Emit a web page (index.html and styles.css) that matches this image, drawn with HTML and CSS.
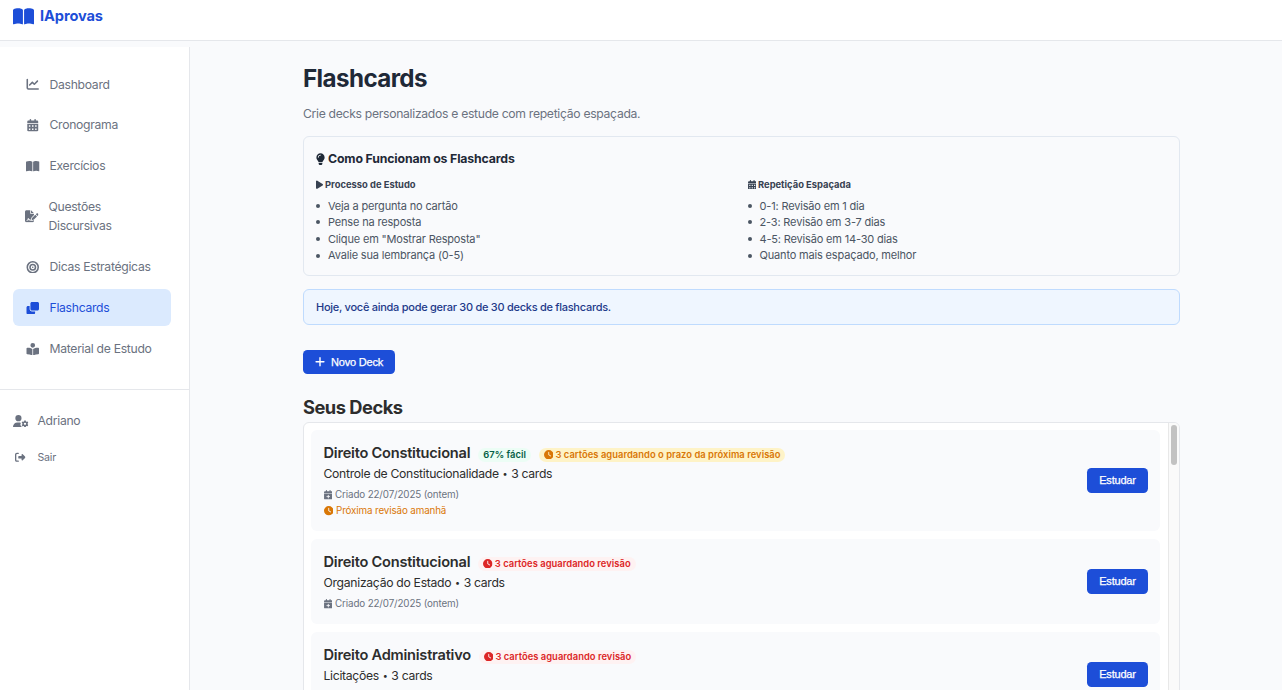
FILE: index.html
```html
<!DOCTYPE html>
<html lang="pt-BR">
<head>
<meta charset="utf-8">
<title>IAprovas - Flashcards</title>
<link rel="stylesheet" href="styles.css">
</head>
<body>
<svg class="sprite" aria-hidden="true">
  <symbol id="book-open" viewBox="0 0 576 512"><path d="M249.6 471.5c10.8 3.8 22.4-4.1 22.4-15.5V78.6c0-4.2-1.6-8.4-5-11C247.4 52 202.4 32 144 32C93.5 32 46.3 45.3 18.1 56.1C6.8 60.5 0 71.7 0 83.8V454.1c0 11.9 12.8 20.2 24.1 16.5C55.6 460.1 105.5 448 144 448c33.9 0 79 14 105.6 23.5zm76.8 0C353 462 398.1 448 432 448c38.5 0 88.4 12.1 119.9 22.6c11.3 3.8 24.1-4.6 24.1-16.5V83.8c0-12.1-6.8-23.3-18.1-27.6C529.7 45.3 482.5 32 432 32c-58.4 0-103.4 20-123 35.6c-3.3 2.6-5 6.8-5 11V456c0 11.4 11.7 19.3 22.4 15.5z"/></symbol>
  <symbol id="chart-line" viewBox="0 0 512 512"><path d="M64 64c0-17.7-14.3-32-32-32S0 46.3 0 64V400c0 44.2 35.8 80 80 80H480c17.7 0 32-14.3 32-32s-14.3-32-32-32H80c-8.8 0-16-7.2-16-16V64zm406.6 86.6c12.5-12.5 12.5-32.8 0-45.3s-32.8-12.5-45.3 0L320 210.7l-57.4-57.4c-12.5-12.5-32.8-12.5-45.3 0l-112 112c-12.5 12.5-12.5 32.8 0 45.3s32.8 12.5 45.3 0L240 221.3l57.4 57.4c12.5 12.5 32.8 12.5 45.3 0l128-128z"/></symbol>
  <symbol id="calendar" viewBox="0 0 448 512"><path fill-rule="evenodd" d="M128 0c17.7 0 32 14.3 32 32V64H288V32c0-17.7 14.3-32 32-32s32 14.3 32 32V64h48c26.5 0 48 21.5 48 48v48H0V112C0 85.5 21.5 64 48 64H96V32c0-17.7 14.3-32 32-32zM0 192H448V464c0 26.5-21.5 48-48 48H48c-26.5 0-48-21.5-48-48V192zm64 80v32c0 8.800 7.200 16 16 16h32c8.800 0 16-7.200 16-16V272c0-8.800-7.200-16-16-16H80c-8.800 0-16 7.200-16 16zm128 0v32c0 8.800 7.200 16 16 16h32c8.800 0 16-7.200 16-16V272c0-8.800-7.200-16-16-16H208c-8.800 0-16 7.200-16 16zm144-16c-8.800 0-16 7.200-16 16v32c0 8.800 7.200 16 16 16h32c8.800 0 16-7.200 16-16V272c0-8.800-7.200-16-16-16H336zM64 400v32c0 8.800 7.200 16 16 16h32c8.800 0 16-7.200 16-16V400c0-8.800-7.200-16-16-16H80c-8.800 0-16 7.200-16 16zm144-16c-8.800 0-16 7.200-16 16v32c0 8.800 7.200 16 16 16h32c8.800 0 16-7.200 16-16V400c0-8.800-7.200-16-16-16H208zm112 16v32c0 8.800 7.200 16 16 16h32c8.800 0 16-7.200 16-16V400c0-8.800-7.200-16-16-16H336c-8.800 0-16 7.200-16 16z"/></symbol>
  <symbol id="calendar-plus" viewBox="0 0 448 512"><path fill-rule="evenodd" d="M128 0c17.7 0 32 14.3 32 32V64H288V32c0-17.7 14.3-32 32-32s32 14.3 32 32V64h48c26.5 0 48 21.5 48 48v48H0V112C0 85.5 21.5 64 48 64H96V32c0-17.7 14.3-32 32-32zM0 192H448V464c0 26.5-21.5 48-48 48H48c-26.5 0-48-21.5-48-48V192zM248 272c0-13.3-10.7-24-24-24s-24 10.7-24 24v56H144c-13.300 0-24 10.700-24 24s10.700 24 24 24h56v56c0 13.300 10.700 24 24 24s24-10.700 24-24V376h56c13.300 0 24-10.700 24-24s-10.700-24-24-24H248V272z"/></symbol>
  <symbol id="clock" viewBox="0 0 512 512"><path fill-rule="evenodd" d="M256 0a256 256 0 1 1 0 512A256 256 0 1 1 256 0zM232 120V256c0 8 4 15.500 10.700 20l96 64c11 7.400 25.900 4.400 33.300-6.700s4.400-25.900-6.700-33.300L280 243.200V120c0-13.300-10.700-24-24-24s-24 10.700-24 24z"/></symbol>
  <symbol id="file-signature" viewBox="0 0 576 512"><path d="M64 0C28.7 0 0 28.7 0 64V448c0 35.3 28.7 64 64 64H320c35.3 0 64-28.7 64-64V428.7c-2.7 1.1-5.4 2-8.2 2.7l-60.1 15c-3 .7-6 1.2-9 1.4c-.9 .1-1.8 .2-2.7 .2H240c-6.1 0-11.6-3.4-14.3-8.8l-8.8-17.7c-1.7-3.4-5.1-5.5-8.8-5.5s-7.2 2.1-8.8 5.5l-8.8 17.7c-2.9 5.9-9.2 9.4-15.7 8.8s-12.1-5.1-13.9-11.3L144 381l-9.8 32.8c-6.1 20.3-24.8 34.2-46 34.2H80c-8.8 0-16-7.2-16-16s7.2-16 16-16h8.2c7.1 0 13.3-4.6 15.3-11.4l14.9-49.5c3.4-11.3 13.8-19.1 25.6-19.1s22.2 7.7 25.6 19.1l11.6 38.6c7.4-6.2 16.8-9.7 26.8-9.7c15.9 0 30.4 9 37.5 23.2l4.4 8.8h8.9c-3.1-8.8-3.7-18.4-1.4-27.8l15-60.1c2.8-11.3 8.6-21.5 16.8-29.7L384 203.600V160H256c-17.700 0-32-14.300-32-32V0H64zM256 0V128H384L256 0zM549.800 139.700c-15.600-15.600-40.900-15.600-56.600 0l-29.400 29.400 71 71 29.400-29.400c15.600-15.600 15.600-40.900 0-56.600l-14.400-14.400zM311.900 321c-4.100 4.100-7 9.200-8.400 14.900l-15 60.100c-1.400 5.500 .2 11.200 4.200 15.200s9.700 5.600 15.200 4.200l60.100-15c5.600-1.400 10.800-4.300 14.900-8.400L512.100 262.700l-71-71L311.900 321z"/></symbol>
  <symbol id="bullseye" viewBox="0 0 512 512"><path fill-rule="evenodd" d="M448 256A192 192 0 1 0 64 256a192 192 0 1 0 384 0zM0 256a256 256 0 1 1 512 0A256 256 0 1 1 0 256zm256 80a80 80 0 1 0 0-160 80 80 0 1 0 0 160zm0-224a144 144 0 1 1 0 288 144 144 0 1 1 0-288zM224 256a32 32 0 1 1 64 0 32 32 0 1 1-64 0z"/></symbol>
  <symbol id="clone" viewBox="0 0 512 512"><path d="M0 448c0 35.3 28.7 64 64 64H288c35.3 0 64-28.7 64-64V384H224c-53 0-96-43-96-96V160H64c-35.3 0-64 28.7-64 64V448zm224-96H448c35.3 0 64-28.7 64-64V64c0-35.3-28.7-64-64-64H224c-35.3 0-64 28.7-64 64V288c0 35.3 28.7 64 64 64z"/></symbol>
  <symbol id="book-reader" viewBox="0 0 512 512"><path d="M160 96a96 96 0 1 1 192 0A96 96 0 1 1 160 96zm80 152V512l-48.4-24.2c-20.9-10.4-43.5-17-66.8-19.3l-96-9.6C12.5 457.2 0 443.5 0 427V224c0-17.7 14.3-32 32-32H62.3c63.6 0 125.6 19.6 177.7 56zm32 264V248c52.1-36.4 114.1-56 177.7-56H480c17.7 0 32 14.3 32 32V427c0 16.4-12.5 30.2-28.8 31.8l-96 9.600c-23.200 2.300-45.900 8.900-66.800 19.300L272 512z"/></symbol>
  <symbol id="user-cog" viewBox="0 0 640 512"><path d="M224 0a128 128 0 1 1 0 256A128 128 0 1 1 224 0zM178.300 304h91.400c11.800 0 23.400 1.200 34.500 3.300c-2.100 18.500 7.400 35.600 21.800 44.800c-16.600 10.600-26.700 31.600-20 53.300c4 12.900 9.400 25.500 16.400 37.600s15.200 23.100 24.400 33c15.700 16.900 39.600 18.400 57.200 8.700v.9c0 9.200 2.700 18.500 7.900 26.300H29.700C13.300 512 0 498.700 0 482.300C0 383.800 79.800 304 178.300 304z"/><path fill-rule="evenodd" d="M464 222h64l8 42 26 15 41-14 32 56-33 28v30l33 28-32 56-41-14-26 15-8 42h-64l-8-42-26-15-41 14-32-56 33-28v-30l-33-28 32-56 41 14 26-15zM544 364a48 48 0 1 0-96 0 48 48 0 1 0 96 0z"/></symbol>
  <symbol id="sign-out" viewBox="0 0 512 512"><path d="M377.900 105.900L500.700 228.700c7.200 7.200 11.300 17.100 11.300 27.300s-4.100 20.100-11.300 27.300L377.900 406.100c-6.400 6.400-15 9.900-24 9.900c-18.700 0-33.900-15.200-33.900-33.900l0-62.100-128 0c-17.700 0-32-14.300-32-32l0-64c0-17.700 14.300-32 32-32l128 0 0-62.100c0-18.700 15.200-33.900 33.900-33.900c9 0 17.600 3.600 24 9.900zM160 96L96 96c-17.700 0-32 14.300-32 32l0 256c0 17.700 14.300 32 32 32l64 0c17.700 0 32 14.300 32 32s-14.300 32-32 32l-64 0c-53 0-96-43-96-96L0 128C0 75 43 32 96 32l64 0c17.700 0 32 14.300 32 32s-14.300 32-32 32z"/></symbol>
  <symbol id="lightbulb" viewBox="0 0 384 512"><path fill-rule="evenodd" d="M272 384c9.600-31.900 29.500-59.100 49.200-86.200c5.200-7.100 10.400-14.200 15.400-21.400c19.800-28.500 31.400-63 31.400-100.300C368 78.800 289.200 0 192 0S16 78.800 16 176c0 37.300 11.600 71.900 31.400 100.300c5 7.200 10.200 14.300 15.400 21.400c19.800 27.100 39.700 54.400 49.200 86.200H272zM192 512c44.200 0 80-35.800 80-80V416H112v16c0 44.200 35.800 80 80 80zM112 176c0 8.800-7.200 16-16 16s-16-7.200-16-16c0-61.900 50.100-112 112-112c8.800 0 16 7.200 16 16s-7.200 16-16 16c-44.200 0-80 35.800-80 80z"/></symbol>
  <symbol id="play" viewBox="0 0 384 512"><path d="M73 39c-14.800-9.100-33.400-9.400-48.500-.9S0 62.600 0 80V432c0 17.400 9.400 33.400 24.500 41.900s33.700 8.100 48.500-.9L361 297c14.300-8.700 23-24.200 23-41s-8.700-32.200-23-41L73 39z"/></symbol>
  <symbol id="plus" viewBox="0 0 448 512"><path d="M256 80c0-17.700-14.300-32-32-32s-32 14.300-32 32V224H48c-17.700 0-32 14.300-32 32s14.300 32 32 32H192V432c0 17.700 14.300 32 32 32s32-14.300 32-32V288H400c17.700 0 32-14.300 32-32s-14.300-32-32-32H256V80z"/></symbol>
</svg>

<header class="topbar">
  <a class="brand"><svg class="icon brand-icon"><use href="#book-open"/></svg><span>IAprovas</span></a>
</header>

<div class="shell">
  <aside class="sidebar">
    <nav class="nav">
      <a class="nav-item"><svg class="icon"><use href="#chart-line"/></svg><span>Dashboard</span></a>
      <a class="nav-item"><svg class="icon"><use href="#calendar"/></svg><span>Cronograma</span></a>
      <a class="nav-item"><svg class="icon"><use href="#book-open"/></svg><span>Exercícios</span></a>
      <a class="nav-item nav-item-wrap"><svg class="icon"><use href="#file-signature"/></svg><span>Questões Discursivas</span></a>
      <a class="nav-item"><svg class="icon"><use href="#bullseye"/></svg><span>Dicas Estratégicas</span></a>
      <a class="nav-item nav-item-active"><svg class="icon"><use href="#clone"/></svg><span>Flashcards</span></a>
      <a class="nav-item"><svg class="icon"><use href="#book-reader"/></svg><span>Material de Estudo</span></a>
    </nav>
    <div class="account">
      <a class="account-item"><svg class="icon account-icon"><use href="#user-cog"/></svg><span>Adriano</span></a>
      <a class="account-item account-exit"><svg class="icon exit-icon"><use href="#sign-out"/></svg><span>Sair</span></a>
    </div>
  </aside>

  <main class="main">
    <h1 class="title">Flashcards</h1>
    <p class="subtitle">Crie decks personalizados e estude com repetição espaçada.</p>

    <section class="info">
      <h3 class="info-title"><svg class="icon bulb-icon"><use href="#lightbulb"/></svg>Como Funcionam os Flashcards</h3>
      <div class="info-grid">
        <div>
          <h4 class="info-sub"><svg class="icon play-icon"><use href="#play"/></svg>Processo de Estudo</h4>
          <ul class="info-list">
            <li>Veja a pergunta no cartão</li>
            <li>Pense na resposta</li>
            <li>Clique em "Mostrar Resposta"</li>
            <li>Avalie sua lembrança (0-5)</li>
          </ul>
        </div>
        <div>
          <h4 class="info-sub"><svg class="icon cal-icon"><use href="#calendar"/></svg>Repetição Espaçada</h4>
          <ul class="info-list">
            <li>0-1: Revisão em 1 dia</li>
            <li>2-3: Revisão em 3-7 dias</li>
            <li>4-5: Revisão em 14-30 dias</li>
            <li>Quanto mais espaçado, melhor</li>
          </ul>
        </div>
      </div>
    </section>

    <div class="notice">Hoje, você ainda pode gerar 30 de 30 decks de flashcards.</div>

    <button class="btn btn-new"><svg class="icon plus-icon"><use href="#plus"/></svg>Novo Deck</button>

    <h2 class="section-title">Seus Decks</h2>
    <div class="decks">
      <div class="deck-list">
        <article class="deck">
          <div class="deck-body">
            <div class="deck-head"><h3 class="deck-name">Direito Constitucional</h3><span class="tag tag-easy">67% fácil</span><span class="tag tag-wait"><svg class="icon clock-icon"><use href="#clock"/></svg>3 cartões aguardando o prazo da próxima revisão</span></div>
            <p class="deck-topic">Controle de Constitucionalidade <span class="dot">•</span> 3 cards</p>
            <p class="deck-meta"><svg class="icon cal-icon"><use href="#calendar-plus"/></svg>Criado 22/07/2025 (ontem)</p>
            <p class="deck-meta deck-next"><svg class="icon clock-icon"><use href="#clock"/></svg>Próxima revisão amanhã</p>
          </div>
          <button class="btn">Estudar</button>
        </article>
        <article class="deck">
          <div class="deck-body">
            <div class="deck-head"><h3 class="deck-name">Direito Constitucional</h3><span class="tag tag-due"><svg class="icon clock-icon"><use href="#clock"/></svg>3 cartões aguardando revisão</span></div>
            <p class="deck-topic">Organização do Estado <span class="dot">•</span> 3 cards</p>
            <p class="deck-meta"><svg class="icon cal-icon"><use href="#calendar-plus"/></svg>Criado 22/07/2025 (ontem)</p>
          </div>
          <button class="btn">Estudar</button>
        </article>
        <article class="deck">
          <div class="deck-body">
            <div class="deck-head"><h3 class="deck-name">Direito Administrativo</h3><span class="tag tag-due"><svg class="icon clock-icon"><use href="#clock"/></svg>3 cartões aguardando revisão</span></div>
            <p class="deck-topic">Licitações <span class="dot">•</span> 3 cards</p>
          </div>
          <button class="btn">Estudar</button>
        </article>
      </div>
      <div class="scroll-track"><div class="scroll-thumb"></div></div>
    </div>
  </main>
</div>
</body>
</html>
```
FILE: styles.css
```css
* { box-sizing: border-box; }
body {
  margin: 0;
  height: 690px;
  overflow: hidden;
  background: #f9fafc;
  color: #2d2d2d;
  font-family: Inter, "Liberation Sans", sans-serif;
  font-size: 12.2px;
  letter-spacing: -0.3px;
}
h1, h2, h3, h4, p, ul { margin: 0; padding: 0; }
.sprite { display: none; }
.icon { fill: currentColor; flex: none; width: 14px; height: 12.5px; }

.topbar {
  height: 41px;
  padding: 4px 13px 0;
  background: #fff;
  border-bottom: 1px solid #e5e7eb;
}
.brand {
  display: flex;
  align-items: center;
  gap: 6px;
  height: 24px;
  color: #1d4ed8;
  font-size: 14.6px;
  font-weight: 700;
  letter-spacing: -0.1px;
}
.brand-icon { width: 21px; height: 19px; }

.shell { display: flex; height: 649px; }
.sidebar {
  width: 190px;
  flex: none;
  margin-top: 6px;
  background: #fff;
  border-right: 1px solid #e5e7eb;
  color: #6b7280;
}
.nav {
  display: flex;
  flex-direction: column;
  gap: 4px;
  height: 343px;
  padding: 19px 18px 0 13px;
  border-bottom: 1px solid #e5e7eb;
}
.nav-item {
  display: flex;
  align-items: center;
  gap: 10px;
  padding: 9.500px 13px 8.500px;
  border-radius: 6px;
  line-height: 18.9px;
}
.nav-item .icon { width: 13.500px; margin-top: -1px; }
.nav-item-wrap { padding-left: 12px; }
.nav-item-active { background: #dbeafe; color: #1d4ed8; }
.account { padding: 22px 13px; }
.account-item { display: flex; align-items: center; gap: 9px; line-height: 18px; }
.account-icon { width: 15.500px; height: 12.500px; }
.account-exit { margin-top: 18.500px; gap: 12px; padding-left: 2px; font-size: 10.6px; letter-spacing: -0.2px; }
.exit-icon { width: 10.500px; height: 10.500px; }

.main { width: 877px; margin-left: 113px; padding-top: 22px; }
.title { color: #1f2937; font-size: 24.2px; line-height: 32px; letter-spacing: -0.6px; }
.subtitle { margin-top: 9px; color: #6b7280; line-height: 19px; letter-spacing: -0.31px; }
.info {
  height: 140px;
  margin-top: 13px;
  padding: 12px;
  border: 1px solid #e2e8f0;
  border-radius: 6px;
}
.info-title { display: flex; align-items: center; gap: 3px; color: #1f2937; font-size: 12.300px; line-height: 20px; letter-spacing: -0.15px; }
.bulb-icon { width: 9px; height: 12.500px; }
.info-grid { display: grid; grid-template-columns: 1fr 1fr; gap: 12px; margin-top: 9px; }
.info-sub { display: flex; align-items: center; gap: 2px; color: #374151; font-size: 9.400px; line-height: 13px; letter-spacing: 0; }
.play-icon { width: 7px; height: 9.400px; }
.cal-icon { width: 8.500px; height: 9.600px; }
.info-list { margin-top: 6.500px; list-style: none; color: #4b5563; font-size: 11px; line-height: 16.600px; letter-spacing: -0.17px; }
.info-list li { display: flex; align-items: center; gap: 8px; }
.info-list li::before { content: ""; width: 4px; height: 4px; border-radius: 50%; background: #4b5563; }
.notice {
  height: 36.500px;
  margin-top: 12.500px;
  padding: 0 12px;
  background: #eff6ff;
  border: 1px solid #bfdbfe;
  border-radius: 6px;
  color: #1e3a8a;
  font-size: 11px;
  font-weight: 500;
  line-height: 35px;
  letter-spacing: -0.27px;
}
.btn {
  display: flex;
  align-items: center;
  justify-content: center;
  width: 61px;
  height: 24.500px;
  flex: none;
  padding: 0 0 1px;
  border: 0;
  border-radius: 4.500px;
  background: #1d4ed8;
  color: #fff;
  font: 500 11px "Liberation Sans", Arial, sans-serif;
  letter-spacing: -0.2px;
  -webkit-text-stroke: 0.25px #fff;
}
.btn-new { width: 92px; margin-top: 24.500px; padding: 0; gap: 6px; }
.plus-icon { width: 10px; height: 11.500px; }
.section-title { margin-top: 20.500px; font-size: 18.300px; line-height: 24px; letter-spacing: -0.5px; }
.decks {
  display: flex;
  height: 300px;
  margin-top: 3.500px;
  background: #fff;
  border: 1px solid #e5e7eb;
  border-radius: 6px 6px 0 0;
  overflow: hidden;
}
.deck-list { flex: 1; padding: 7px 8px 0 7px; }
.deck {
  display: flex;
  align-items: center;
  justify-content: space-between;
  min-height: 85px;
  margin-bottom: 8px;
  padding: 12px 12px 12px 12.500px;
  border-radius: 6px;
  background: #f9fafc;
}
.deck-body { align-self: flex-start; }
.deck-head { display: flex; align-items: center; height: 22px; }
.deck-name { font-size: 14.600px; font-weight: 600; letter-spacing: -0.23px; }
.tag {
  display: flex;
  align-items: center;
  gap: 2px;
  height: 14px;
  margin: 3px 0 0 8px;
  padding: 0 5px;
  border-radius: 7px;
  font-size: 9.400px;
  font-weight: 600;
  letter-spacing: 0.03px;
}
.tag-easy { background: #ecfdf5; color: #065f46; }
.tag-wait { background: #fef3c7; color: #d97706; }
.tag-due { background: #fef2f2; color: #dc2626; }
.clock-icon { width: 9.500px; height: 9.500px; }
.deck-topic { line-height: 20px; }
.dot { font-size: 9px; vertical-align: 1px; line-height: 1; padding: 0 0.700px; }
.deck-meta { display: flex; align-items: center; gap: 3px; margin-top: 3px; color: #6b7280; font-size: 9.800px; line-height: 16px; letter-spacing: -0.12px; }
.deck-next { margin-top: 0; color: #d97706; }
.scroll-track { width: 11px; padding: 2px 2px 0; background: #fafafa; border-left: 1px solid #e8e8e8; }
.scroll-thumb { width: 6px; height: 40px; border-radius: 3px; background: #c2c2c2; }
```
